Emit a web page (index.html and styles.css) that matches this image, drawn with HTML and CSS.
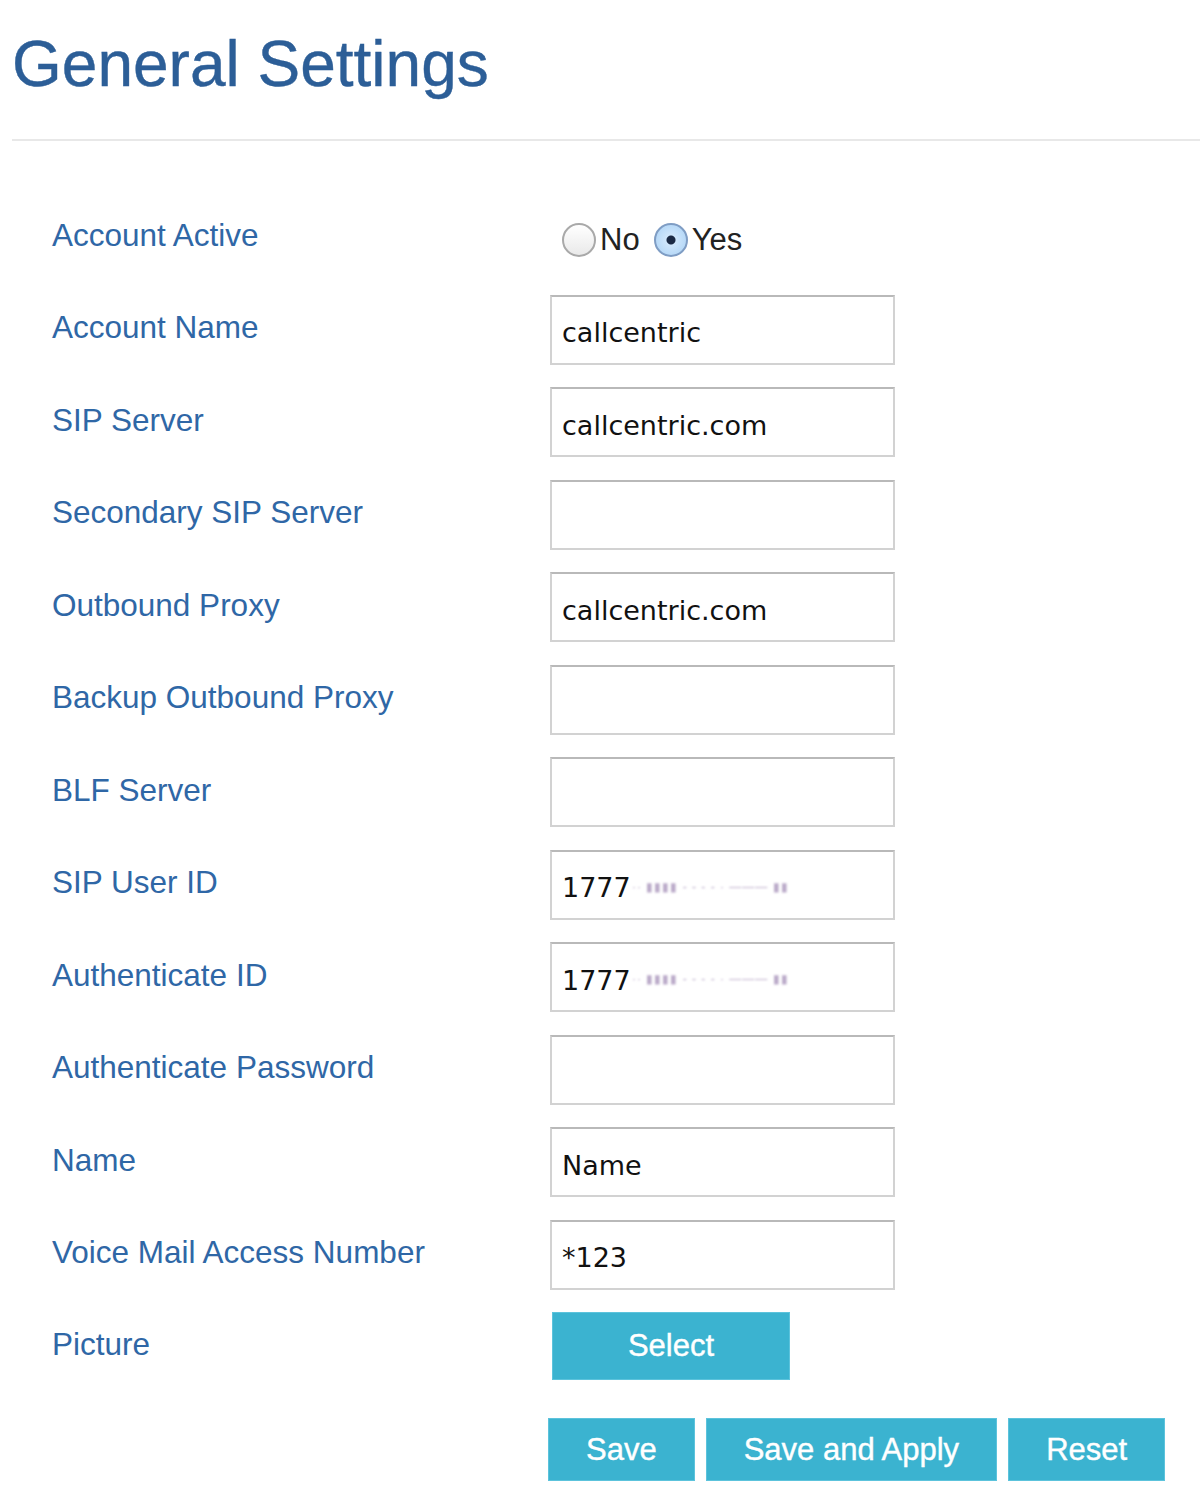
FILE: index.html
```html
<!DOCTYPE html>
<html lang="en">
<head>
    <meta charset="UTF-8">
    <title>General Settings</title>
    <link rel="stylesheet" href="styles.css">
</head>
<body>

<header class="page-head">
    <h1>General Settings</h1>
</header>

<!-- account form -->
<form class="settings" onsubmit="return false;">
    <div class="row">
        <label>Account Active</label>
        <div class="radios">
            <input type="radio" name="active" id="activeNo">
            <label for="activeNo" class="radio-text">No</label>
            <input type="radio" name="active" id="activeYes" checked>
            <label for="activeYes" class="radio-text">Yes</label>
        </div>
    </div>
    <div class="row">
        <label for="accName">Account Name</label>
        <input type="text" id="accName" value="callcentric">
    </div>
    <div class="row">
        <label for="sipServer">SIP Server</label>
        <input type="text" id="sipServer" value="callcentric.com">
    </div>
    <div class="row">
        <label for="sipServer2">Secondary SIP Server</label>
        <input type="text" id="sipServer2">
    </div>
    <div class="row">
        <label for="proxy">Outbound Proxy</label>
        <input type="text" id="proxy" value="callcentric.com">
    </div>
    <div class="row">
        <label for="proxy2">Backup Outbound Proxy</label>
        <input type="text" id="proxy2">
    </div>
    <div class="row">
        <label for="blf">BLF Server</label>
        <input type="text" id="blf">
    </div>
    <div class="row">
        <label for="userId">SIP User ID</label>
        <div class="masked">
            <input type="text" id="userId" value="1777">
            <span class="blur">&middot;&middot; ▮▮▮▮ - - - - · ——— ▮▮</span>
        </div>
    </div>
    <div class="row">
        <label for="authId">Authenticate ID</label>
        <div class="masked">
            <input type="text" id="authId" value="1777">
            <span class="blur">&middot;&middot; ▮▮▮▮ - - - - · ——— ▮▮</span>
        </div>
    </div>
    <div class="row">
        <label for="authPass">Authenticate Password</label>
        <input type="password" id="authPass">
    </div>
    <div class="row">
        <label for="dispName">Name</label>
        <input type="text" id="dispName" value="Name">
    </div>
    <div class="row">
        <label for="vmNumber">Voice Mail Access Number</label>
        <input type="text" id="vmNumber" value="*123">
    </div>
    <div class="row row-picture">
        <label>Picture</label>
        <div><button type="button" class="btn btn-select">Select</button></div>
    </div>

    <div class="actions">
        <button type="submit" class="btn">Save</button>
        <button type="submit" class="btn">Save and Apply</button>
        <button type="reset" class="btn">Reset</button>
    </div>
</form>

</body>
</html>
```

FILE: styles.css
```css
/* general */
body {
    margin: 0;
    background: #fff;
    font-family: "Liberation Sans", Arial, sans-serif;
}

/* page title */
.page-head {
    margin-left: 12px;
    padding-top: 27px;
    height: 141px;
    border-bottom: 2px solid #e8e8e8;
    box-sizing: border-box;
}

.page-head h1 {
    margin: 0;
    font-size: 64px;
    font-weight: normal;
    color: #2c5e97;
    -webkit-text-stroke: 0.4px #2c5e97;
}

/* form rows */
.settings {
    padding: 61px 0 40px 52px;
}

.row {
    display: grid;
    grid-template-columns: 498px 345px;
    align-items: center;
    height: 70px;
    margin-bottom: 22.5px;
}

.row > label {
    font-size: 31.5px;
    color: #2f67a6;
    margin-top: -4px;
}

.row input[type="text"],
.row input[type="password"] {
    width: 345px;
    height: 70px;
    box-sizing: border-box;
    padding: 6px 10px 0;
    border: 2px solid #d2d2d2;
    border-top-color: #b9b9b9;
    border-radius: 0;
    font-family: "DejaVu Sans", Verdana, sans-serif;
    font-size: 27px;
    color: #111;
    outline: none;
}

.row input:focus {
    border-color: #3bb3d0;
}

/* radio buttons */
.radios {
    display: flex;
    align-items: center;
    padding-left: 12px;
    margin-top: 6px;
}

.radios input[type="radio"] {
    -webkit-appearance: none;
    appearance: none;
    width: 34px;
    height: 34px;
    margin: 0;
    border-radius: 50%;
    border: 2px solid #a9a9a9;
    background: linear-gradient(#ffffff, #e9e9e9);
    box-sizing: border-box;
}

.radios input[type="radio"]:checked {
    border-color: #7f9dc4;
    background: radial-gradient(circle, #1b2a44 0, #1b2a44 4px, #cfe6fb 5px, #a9d1f5 100%);
}

.radio-text {
    font-size: 31px;
    color: #222;
    margin: 0 14px 0 4px;
}

/* redacted id */
.masked {
    position: relative;
    width: 345px;
}

.masked .blur {
    position: absolute;
    left: 82px;
    top: 30px;
    font-size: 12px;
    letter-spacing: 1px;
    color: #b9a9c8;
    filter: blur(1.2px);
    white-space: nowrap;
    pointer-events: none;
}

/* buttons */
.btn {
    background-color: #3bb3d0;
    color: #fff;
    border: 1px solid #5cc3dc;
    font-family: "Liberation Sans", Arial, sans-serif;
    font-size: 31px;
    height: 63px;
    padding: 0 37px;
    cursor: pointer;
    -webkit-text-stroke: 0.4px #fff;
}

.btn:hover {
    background-color: #31a3bf;
}

.row-picture {
    height: 68px;
}

.btn-select {
    width: 238px;
    height: 68px;
    margin-left: 2px;
}

.actions {
    display: flex;
    gap: 11px;
    margin: 38px 0 0 496px;
}
```
